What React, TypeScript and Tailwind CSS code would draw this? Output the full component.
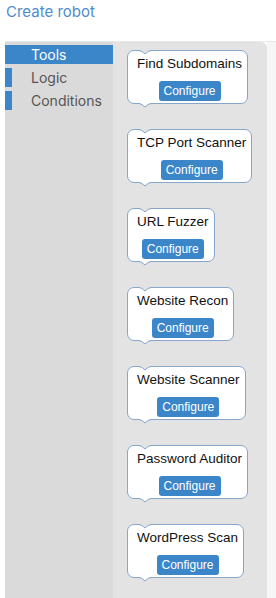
import React from 'react';

// Blockly-like robot editor: toolbox on the left, tool blocks on the workspace

const tools = [
  'Find Subdomains',
  'TCP Port Scanner',
  'URL Fuzzer',
  'Website Recon',
  'Website Scanner',
  'Password Auditor',
  'WordPress Scan',
];

const categories = [
  { label: 'Tools', active: true },
  { label: 'Logic', active: false },
  { label: 'Conditions', active: false },
];

const BORDER = '#86a6cc';
const WORKSPACE = '#e3e3e3';

const Block: React.FC<{ title: string }> = ({ title }) => (
  <div
    className="relative inline-flex flex-col h-[54px] bg-white border border-[#86a6cc] rounded-[7px] pl-[9px] pr-[5px] pt-[5px]"
    style={{ fontFamily: '"Liberation Sans", Arial, sans-serif' }}
  >
    {/* top notch */}
    <svg className="absolute left-[7px] -top-[1px]" width="20" height="6" viewBox="0 0 20 6">
      <path d="M5 0 Q7 0.5 10 4 Q13 0.5 15 0 Z" fill={WORKSPACE} />
      <rect x="5" y="0" width="10" height="1" fill={WORKSPACE} />
      <path d="M0 0.5 H4 Q7 0.8 10 4 Q13 0.8 16 0.5 H20" fill="none" stroke={BORDER} strokeWidth="1" />
    </svg>
    <span className="self-start whitespace-nowrap text-[13.5px] leading-[16px] text-[#111]">{title}</span>
    <button className="self-center mt-[9px] h-[20px] px-[5px] rounded-[3px] bg-[#3b86c9] text-white text-[12px] leading-[20px]">
      Configure
    </button>
    {/* bottom tab */}
    <svg className="absolute left-[7px] top-full" width="20" height="6" viewBox="0 0 20 6">
      <path d="M4 0 H16 Q13 0.8 10 4 Q7 0.8 4 0 Z" fill="white" />
      <path d="M0 0.5 H4 Q7 0.8 10 4 Q13 0.8 16 0.5 H20" fill="none" stroke={BORDER} strokeWidth="1" />
    </svg>
  </div>
);

const App: React.FC = () => {
  return (
    <div className="w-[276px] h-[598px] bg-white overflow-hidden">
      <div
        className="h-[41px] pl-[6px] pt-[2px] text-[15px] leading-[20px] text-[#4f8bd0]"
        style={{ fontFamily: 'Inter, "Noto Sans", sans-serif' }}
      >
        Create robot
      </div>

      <div className="flex ml-[5px] h-[557px] border-t border-[#e8e8e8]">
        {/* toolbox */}
        <nav
          className="w-[108px] bg-[#dadada] pt-[3px] flex flex-col gap-[4px]"
          style={{ fontFamily: 'Inter, "Noto Sans", sans-serif' }}
        >
          {categories.map((c) => (
            <div
              key={c.label}
              className={`relative h-[19px] pl-[26px] text-[14px] leading-[19px] ${
                c.active ? 'bg-[#3b86c9] text-white' : 'text-[#555]'
              }`}
            >
              {!c.active && <span className="absolute left-0 top-0 w-[7px] h-full bg-[#3b86c9]" />}
              {c.label}
            </div>
          ))}
        </nav>

        {/* workspace */}
        <main className="flex-1 bg-[#e3e3e3] rounded-tr-[6px] pl-[14px] pt-[8px] flex flex-col items-start gap-[25px]">
          {tools.map((t) => (
            <Block key={t} title={t} />
          ))}
        </main>

        <div className="w-[9px] bg-[#f6f6f6]" />
      </div>
    </div>
  );
};

export default App;
